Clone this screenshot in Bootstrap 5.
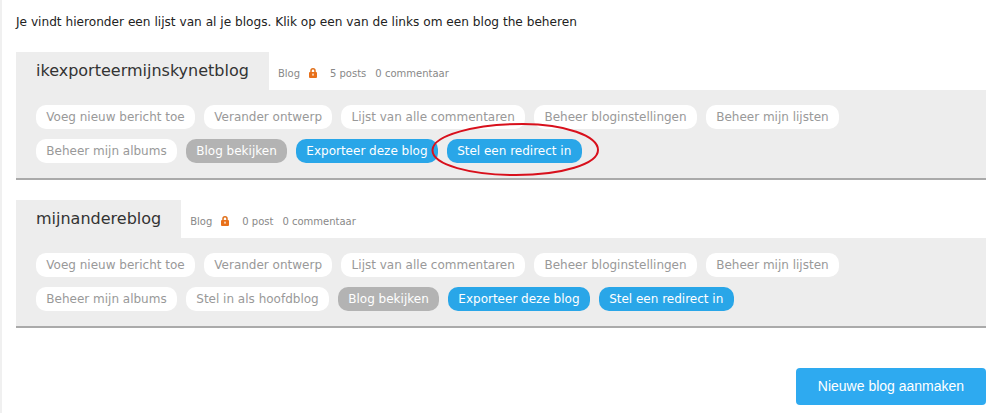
<!DOCTYPE html>
<html lang="en">

<head>
    <meta charset="UTF-8">
    <meta name="viewport" content="width=device-width, initial-scale=1.0">
    <title>Blogs</title>
    <link href="https://cdn.jsdelivr.net/npm/bootstrap@5.3.0/dist/css/bootstrap.min.css" rel="stylesheet">
    <style>
        html, body {
            height: 413px;
            overflow: hidden;
        }

        body {
            background-color: #fff;
            font-family: "DejaVu Sans", Verdana, sans-serif;
            color: #222;
        }

        .page-wrap {
            height: 413px;
            border-left: 2px solid #f0f0f0;
            padding: 15px 15px 0 14px;
        }

        .intro-text {
            font-size: 12.15px;
            line-height: 15px;
            margin: 0 0 22px;
            color: #222;
        }

        .blog-block {
            margin-bottom: 20px;
        }

        .blog-tab {
            background-color: #ededed;
            height: 38px;
            padding: 0 20px 0 20px;
            font-size: 16px;
            line-height: 38px;
            color: #333;
        }

        .blog-meta {
            font-size: 10px;
            color: #888;
            padding-left: 9px;
            padding-top: 5px;
            gap: 9px;
        }

        .lock-icon {
            margin-right: 4px;
            margin-top: -2px;
        }

        .blog-panel {
            background-color: #ededed;
            border-bottom: 2px solid #aaa;
            padding: 15px 20px 15px;
            gap: 10px 9px;
            height: 90px;
        }

        .pill-btn {
            height: 24px;
            line-height: 24px;
            padding: 0 10.3px;
            border-radius: 10px;
            font-size: 12px;
            background-color: #fff;
            color: #999;
            white-space: nowrap;
            text-decoration: none;
        }

        .pill-grey {
            background-color: #b3b3b3;
            color: #fff;
        }

        .pill-blue {
            background-color: #29a6e8;
            color: #fff;
        }

        .redirect-mark {
            position: absolute;
            left: -16px;
            top: -16px;
            pointer-events: none;
        }

        .new-blog-action {
            margin-top: 40px;
        }

        .new-blog-btn {
            width: 190px;
            height: 37px;
            line-height: 37px;
            padding: 0;
            background-color: #2eaaf0;
            border: 0;
            border-radius: 4px;
            color: #fff;
            font-family: "Liberation Sans", Arial, sans-serif;
            font-size: 14px;
        }
    </style>
</head>

<body>
    <div class="page-wrap">
        <p class="intro-text">Je vindt hieronder een lijst van al je blogs. Klik op een van de links om een blog the beheren</p>

        <!-- first blog -->
        <div class="blog-block">
            <div class="d-flex">
                <div class="blog-tab">ikexporteermijnskynetblog</div>
                <div class="blog-meta d-flex align-items-center">
                    <span>Blog</span>
                    <svg class="lock-icon" width="8" height="10" viewBox="0 0 8 10"><path d="M2 4.5V2.8a2 2 0 0 1 4 0V4.5" fill="none" stroke="#e0701a" stroke-width="1.5"/><rect x="0" y="4" width="8" height="6" rx="1" fill="#e8701a"/><rect x="3.2" y="5.6" width="1.6" height="2" fill="#fbe3cc"/></svg>
                    <span>5 posts</span>
                    <span>0 commentaar</span>
                </div>
            </div>
            <div class="blog-panel d-flex flex-wrap align-content-start">
                <a class="pill-btn" href="#">Voeg nieuw bericht toe</a>
                <a class="pill-btn" href="#">Verander ontwerp</a>
                <a class="pill-btn" href="#">Lijst van alle commentaren</a>
                <a class="pill-btn" href="#">Beheer bloginstellingen</a>
                <a class="pill-btn" href="#">Beheer mijn lijsten</a>
                <a class="pill-btn" href="#">Beheer mijn albums</a>
                <a class="pill-btn pill-grey" href="#">Blog bekijken</a>
                <a class="pill-btn pill-blue" href="#">Exporteer deze blog</a>
                <a class="pill-btn pill-blue position-relative" href="#">Stel een redirect in
                    <svg class="redirect-mark" width="170" height="56" viewBox="0 0 170 56"><path d="M1.5 27C2 12 45 1 92 1c42 0 75 12 75 26 0 14-36 25-82 25C40 52 1 42 1.5 27z" fill="none" stroke="#d8101c" stroke-width="2"/></svg>
                </a>
            </div>
        </div>

        <!-- second blog -->
        <div class="blog-block">
            <div class="d-flex">
                <div class="blog-tab">mijnandereblog</div>
                <div class="blog-meta d-flex align-items-center">
                    <span>Blog</span>
                    <svg class="lock-icon" width="8" height="10" viewBox="0 0 8 10"><path d="M2 4.5V2.8a2 2 0 0 1 4 0V4.5" fill="none" stroke="#e0701a" stroke-width="1.5"/><rect x="0" y="4" width="8" height="6" rx="1" fill="#e8701a"/><rect x="3.2" y="5.6" width="1.6" height="2" fill="#fbe3cc"/></svg>
                    <span>0 post</span>
                    <span>0 commentaar</span>
                </div>
            </div>
            <div class="blog-panel d-flex flex-wrap align-content-start">
                <a class="pill-btn" href="#">Voeg nieuw bericht toe</a>
                <a class="pill-btn" href="#">Verander ontwerp</a>
                <a class="pill-btn" href="#">Lijst van alle commentaren</a>
                <a class="pill-btn" href="#">Beheer bloginstellingen</a>
                <a class="pill-btn" href="#">Beheer mijn lijsten</a>
                <a class="pill-btn" href="#">Beheer mijn albums</a>
                <a class="pill-btn" href="#">Stel in als hoofdblog</a>
                <a class="pill-btn pill-grey" href="#">Blog bekijken</a>
                <a class="pill-btn pill-blue" href="#">Exporteer deze blog</a>
                <a class="pill-btn pill-blue" href="#">Stel een redirect in</a>
            </div>
        </div>

        <div class="new-blog-action d-flex justify-content-end">
            <button type="button" class="btn new-blog-btn">Nieuwe blog aanmaken</button>
        </div>
    </div>

    <script src="https://cdn.jsdelivr.net/npm/bootstrap@5.3.0/dist/js/bootstrap.bundle.min.js"></script>
</body>

</html>
